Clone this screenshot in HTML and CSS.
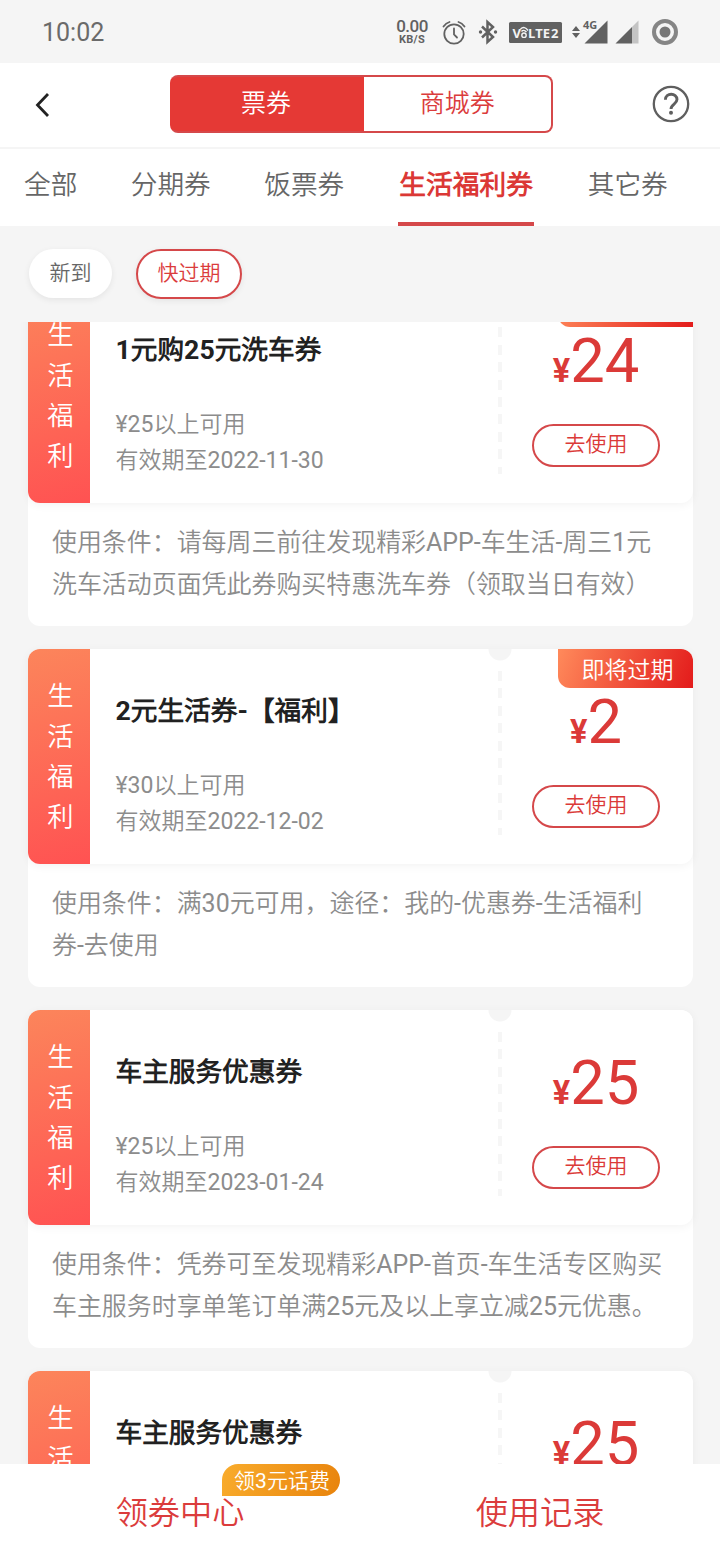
FILE: index.html
```html
<!DOCTYPE html>
<html lang="zh-CN">
<head>
<meta charset="utf-8">
<title>生活福利券</title>
<link rel="stylesheet" href="styles.css">
</head>
<body>
<div class="screen">
  <div class="status">
    <span class="clock">10:02</span>
    <div class="speed"><b>0.00</b><small>KB/S</small></div>
    <svg class="status-icons" width="242" height="36" viewBox="440 14 242 36">
      <g fill="none" stroke="#616161" stroke-width="1.8" stroke-linecap="round">
        <circle cx="454" cy="34" r="9.700"/>
        <path d="M454 28.500v6l3 3M443.500 26.500q2.500-3.500 6-4.500M464.500 26.500q-2.500-3.500-6-4.500"/>
        <path d="M482 26.500l11 10.500-5.500 5V22l5.500 5-11 10.500" stroke-width="2.500" stroke-linecap="butt"/>
      </g>
      <g fill="#616161">
        <circle cx="480.500" cy="32" r="1.700"/><circle cx="495.500" cy="32" r="1.700"/>
        <rect x="509" y="22" width="53" height="21" rx="1.500"/>
        <path d="M572 31l4-5 4 5zM572 33l4 5 4-5z"/>
        <path d="M584.500 43.500L607.500 20.500v23z"/>
        <path d="M615.500 43.500L632 27v16.500z"/>
        <path d="M632 27l6.500-6.500v23H632z" fill="#c4c4c4"/>
      </g>
      <text x="512.500" y="37.500" class="volte">V</text>
      <text x="528" y="37.500" class="volte" textLength="22" lengthAdjust="spacingAndGlyphs">LTE</text>
      <text x="551" y="37.500" class="volte">2</text>
      <g fill="none" stroke="#f4f4f4" stroke-width="1.400"><circle cx="524" cy="35.200" r="2.200"/><path d="M521.500 31.500q2-2.500 5 .5M520.500 29q4-3.500 7.500 1.500"/></g>
      <text x="583" y="28.500" class="net">4G</text>
      <circle cx="665" cy="32" r="11" fill="none" stroke="#858585" stroke-width="4"/>
      <circle cx="665" cy="32" r="5.500" fill="#777"/>
    </svg>
  </div>

  <div class="header">
    <svg class="back" width="16" height="26" viewBox="0 0 16 26"><path d="M13 2L2.500 13 13 24" fill="none" stroke="#222" stroke-width="2.800"/></svg>
    <div class="segment"><span class="seg seg-on">票券</span><span class="seg">商城券</span></div>
    <svg class="help" width="38" height="38" viewBox="0 0 38 38"><g fill="none" stroke="#5f5f5f"><circle cx="19" cy="19" r="17.200" stroke-width="2.300"/><path d="M13.400 14.800C13.400 7.500 25 7.500 25 14.500c0 4.500-6 4.600-6 9.500" stroke-width="2.900"/></g><circle cx="19" cy="27.800" r="2" fill="#5f5f5f"/></svg>
  </div>

  <div class="tabs"><span class="tab">全部</span><span class="tab">分期券</span><span class="tab">饭票券</span><span class="tab tab-on">生活福利券</span><span class="tab">其它券</span></div>

  <div class="filters"><span class="chip">新到</span><span class="chip chip-on">快过期</span></div>

  <div class="viewport">
    <div class="list">
      <div class="card">
        <div class="main">
          <div class="side">生<br>活<br>福<br>利</div>
          <div class="info"><div class="title">1元购25元洗车券</div><div class="meta">¥25以上可用<br>有效期至2022-11-30</div></div>
          <div class="split"></div>
          <div class="offer"><div class="price"><b>¥</b>24</div><div class="use">去使用</div></div>
          <div class="flag">即将过期</div>
        </div>
        <div class="note">使用条件：请每周三前往发现精彩APP-车生活-周三1元<br>洗车活动页面凭此券购买特惠洗车券（领取当日有效）</div>
      </div>
      <div class="card">
        <div class="main">
          <div class="side">生<br>活<br>福<br>利</div>
          <div class="info"><div class="title">2元生活券-【福利】</div><div class="meta">¥30以上可用<br>有效期至2022-12-02</div></div>
          <div class="split"></div>
          <div class="offer"><div class="price"><b>¥</b>2</div><div class="use">去使用</div></div>
          <div class="flag">即将过期</div>
        </div>
        <div class="note">使用条件：满30元可用，途径：我的-优惠券-生活福利<br>券-去使用</div>
      </div>
      <div class="card">
        <div class="main">
          <div class="side">生<br>活<br>福<br>利</div>
          <div class="info"><div class="title">车主服务优惠券</div><div class="meta">¥25以上可用<br>有效期至2023-01-24</div></div>
          <div class="split"></div>
          <div class="offer"><div class="price"><b>¥</b>25</div><div class="use">去使用</div></div>
        </div>
        <div class="note">使用条件：凭券可至发现精彩APP-首页-车生活专区购买<br>车主服务时享单笔订单满25元及以上享立减25元优惠。</div>
      </div>
      <div class="card">
        <div class="main">
          <div class="side">生<br>活<br>福<br>利</div>
          <div class="info"><div class="title">车主服务优惠券</div></div>
          <div class="split"></div>
          <div class="offer"><div class="price"><b>¥</b>25</div></div>
        </div>
      </div>
    </div>
  </div>

  <div class="footer">
    <div class="action">领券中心<span class="promo">领3元话费</span></div>
    <div class="action">使用记录</div>
  </div>
</div>
</body>
</html>
```
FILE: styles.css
```css
* { box-sizing: border-box; }
body { margin: 0; font-family: Roboto, "Noto Sans CJK SC DemiLight", "Noto Sans CJK SC", sans-serif; background: #f5f5f5; }
.screen { width: 720px; height: 1560px; display: flex; flex-direction: column; overflow: hidden; }

.status { height: 63px; flex: none; display: flex; align-items: flex-start; background: #f5f5f5; color: #6a6a6a; }
.clock { width: 384px; padding-left: 42px; font-size: 25px; line-height: 65px; }
.speed { width: 56px; padding-top: 17px; text-align: center; color: #616161; }
.speed b { display: block; font-size: 17px; line-height: 18px; font-weight: 500; letter-spacing: -.5px; }
.speed small { display: block; font-size: 11px; line-height: 10px; font-weight: 700; letter-spacing: .3px; }
.status-icons { margin-top: 14px; }
.volte { font: 700 13px "Open Sans", sans-serif; fill: #f4f4f4; }
.net { font: 700 11px "Open Sans", sans-serif; fill: #616161; }

.header { height: 86px; flex: none; display: flex; align-items: flex-start; background: #fff; border-bottom: 2px solid #f5f5f5; }
.back { margin: 29px 118.5px 0 35px; }
.segment { width: 383.5px; height: 58px; margin: 12px 99px 0 0; display: flex; border: 2px solid #d5484a; border-left-color: #e53935; border-radius: 8px; background: linear-gradient(90deg, #e53935 192px, #fff 192px); }
.seg { flex: 1; text-align: center; font-size: 25px; line-height: 54px; color: #db3c3c; }
.seg-on { flex: 0 0 192px; padding-right: 3px; color: #fff; }
.help { margin-top: 22px; }

.tabs { height: 77px; flex: none; display: flex; gap: 53.5px; padding-left: 24px; background: #fff; font-size: 26.67px; line-height: 73px; color: #666; white-space: nowrap; }
.tab-on { padding: 0 .8px; letter-spacing: .1px; margin-left: .6px; font-weight: 700; color: #db3835; border-bottom: 4px solid #d5484a; }
.tab-on + .tab { margin-left: .6px; }

.filters { height: 96px; flex: none; display: flex; align-items: flex-start; gap: 24px; padding: 23px 29px; font-size: 21px; color: #666; }
.chip { width: 83px; height: 49px; border-radius: 25px; background: #fff; text-align: center; line-height: 49px; box-shadow: 0 2px 6px rgba(0,0,0,.07); }
.chip-on { width: 106px; height: 50px; line-height: 45px; border: 2px solid #d5484a; border-radius: 26px; color: #db3c3c; }

.viewport { height: 1142px; flex: none; overflow: hidden; }
.list { margin: -33.6px 27px 0 28px; display: flex; flex-direction: column; gap: 23px; }
.card { flex: none; background: #fff; border-radius: 12px; }
.main { position: relative; height: 215px; display: flex; background: #fff; border-radius: 12px; box-shadow: 0 2px 10px rgba(0,0,0,.05); }
.side { width: 62px; padding: 27px 0 0 3px; border-radius: 12px 0 0 12px; background: linear-gradient(165deg, #fc855b, #ff5252); color: #fff; font-size: 26.3px; line-height: 40.2px; text-align: center; }
.info { width: 398px; padding: 43.5px 0 0 25.5px; white-space: nowrap; }
.title { color: #212121; font-size: 26.67px; line-height: 36px; font-weight: 700; }
.meta { margin-top: 39.5px; color: #8c8c8c; font-size: 23px; line-height: 36px; }
.split { width: 24px; padding: 22px 10px 0; background: radial-gradient(circle at 12px 0, #f5f5f5 11px, transparent 12px); }
.split::before { content: ""; display: block; height: 164px; width: 4px; background: repeating-linear-gradient(#f6f6f6 0 10px, transparent 10px 17.4px); }
.offer { width: 128px; margin-left: 20px; padding-top: 37px; color: #db3a38; }
.price { text-align: center; font-size: 61.5px; line-height: 72px; white-space: nowrap; }
.price b { font-size: 32.5px; }
.use { margin-top: 17px; height: 42.5px; border: 2px solid #d5484a; border-radius: 22px; text-align: center; font-size: 21px; line-height: 37px; }
.flag { position: absolute; right: 0; top: 0; width: 135px; height: 38.5px; padding-left: 4px; border-radius: 0 12px 0 12px; background: linear-gradient(110deg, #ff8a5b, #e31b1b); color: #fff; font-size: 23px; line-height: 43px; text-align: center; }
.note { height: 123px; padding: 18.5px 0 0 24px; color: #8c8c8c; font-size: 24.95px; line-height: 42px; white-space: nowrap; }

.footer { height: 96px; flex: none; display: flex; background: #fff; color: #db3c3c; font-size: 32.2px; line-height: 98px; text-align: center; }
.action { position: relative; width: 360px; }
.promo { position: absolute; left: 222px; top: 0; width: 118px; height: 32px; padding-left: 2px; border-radius: 16px 16px 16px 0; background: linear-gradient(110deg, #f9ac2c, #e8830c); color: #fff; font-size: 21px; line-height: 34px; }
```
